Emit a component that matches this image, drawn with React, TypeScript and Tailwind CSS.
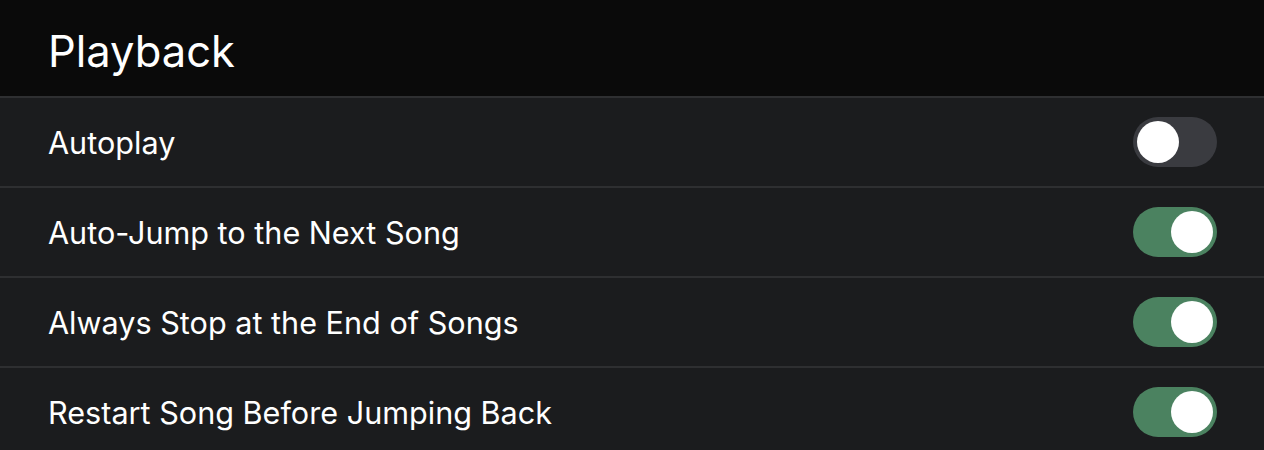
import { useState } from "react";

const rows = [
  { label: "Autoplay", on: false },
  { label: "Auto-Jump to the Next Song", on: true },
  { label: "Always Stop at the End of Songs", on: true },
  { label: "Restart Song Before Jumping Back", on: true },
];

const Toggle = ({ on, onClick }: { on: boolean; onClick: () => void }) => (
  <button
    onClick={onClick}
    className={`flex h-[50px] w-[84px] items-center rounded-full p-1 transition-colors ${
      on ? "justify-end bg-[#4b8260]" : "justify-start bg-[#3a3b40]"
    }`}
  >
    <span className="h-[42px] w-[42px] rounded-full bg-white" />
  </button>
);

export default function App() {
  const [state, setState] = useState(rows.map((r) => r.on));

  return (
    <div className="min-h-[450px] bg-[#1b1c1e] font-['Inter','Noto_Sans',sans-serif] text-white">
      <div className="flex h-[96px] items-center bg-[#0a0a0a] px-12 pt-2">
        <h1 className="text-[43.5px] leading-none">Playback</h1>
      </div>
      {rows.map((row, i) => (
        <div
          key={row.label}
          className="flex h-[90px] items-center justify-between border-t-2 border-[#2e2f31] pl-12 pr-[47px]"
        >
          <span className="pt-[2px] text-[30.6px]">{row.label}</span>
          <Toggle
            on={state[i]}
            onClick={() => setState(state.map((v, j) => (j === i ? !v : v)))}
          />
        </div>
      ))}
    </div>
  );
}
